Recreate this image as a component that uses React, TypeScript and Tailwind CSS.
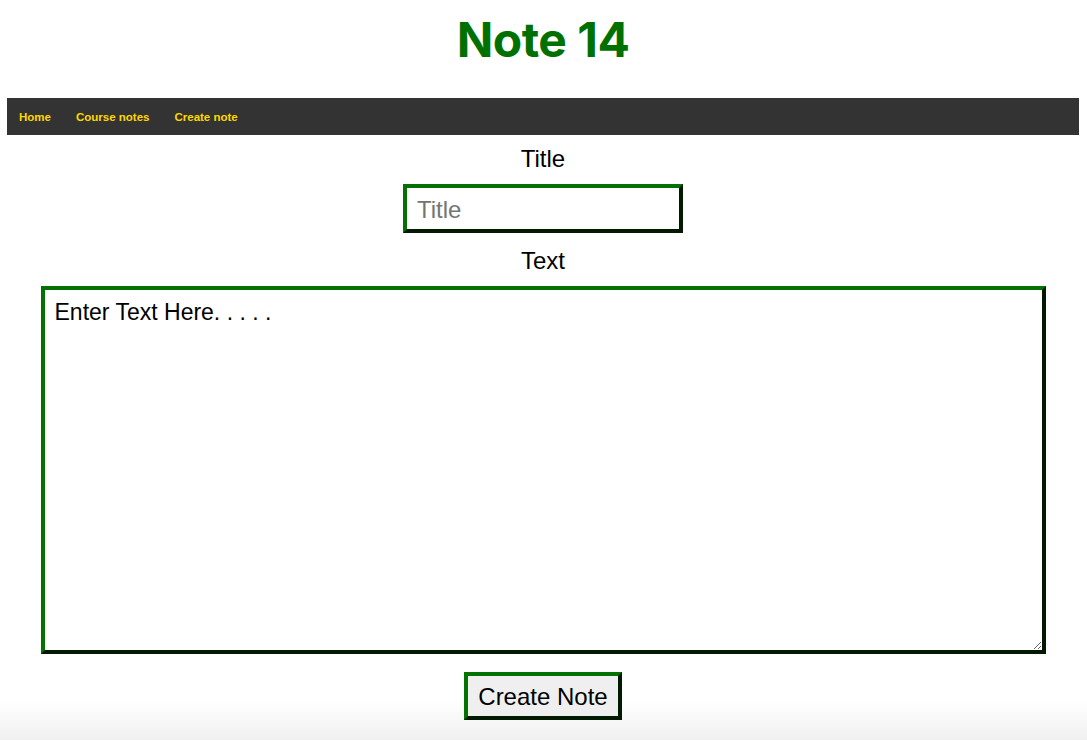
import React from "react";

export default function App() {
  const sans = { fontFamily: '"Liberation Sans", Arial, sans-serif' };
  return (
    <div
      className="min-h-screen bg-[linear-gradient(to_bottom,#ffffff_700px,#f0f0f0_740px)] pl-[7px] pr-[8px] text-black"
      style={sans}
    >
      <h1 className="m-0 flex h-[98px] items-start justify-center pt-[16px] font-['Inter',sans-serif] text-[48px] font-bold leading-none tracking-[-0.5px] text-[#007100]">
        Note 14
      </h1>
      <nav className="flex h-[37px] items-center gap-[25px] bg-[#333333] pl-[12px] pt-[2px] text-[11.5px] font-bold text-[#ffd700]">
        <a>Home</a>
        <a>Course notes</a>
        <a>Create note</a>
      </nav>
      <div className="flex flex-col items-center">
        <label className="mt-[10px] text-[24px] leading-[28px]">Title</label>
        <input
          placeholder="Title"
          className="mt-[11px] box-border h-[49px] w-[280px] border-[4px] border-solid border-t-[#037203] border-l-[#037203] border-b-[#011a01] border-r-[#011a01] bg-white px-[10px] pt-[2px] text-[24px] outline-none placeholder:text-[#757575]"
          style={sans}
        />
        <label className="mt-[14px] text-[24px] leading-[28px]">Text</label>
        <textarea
          defaultValue="Enter Text Here. . . . ."
          className="mt-[11px] box-border h-[368px] w-[1005px] border-[4px] border-solid border-t-[#037203] border-l-[#037203] border-b-[#011a01] border-r-[#011a01] bg-white px-[10px] pt-[9px] text-[23px] leading-[26px] outline-none"
          style={sans}
        />
        <button
          className="mt-[18px] box-border h-[48px] w-[158px] border-[4px] border-solid border-t-[#037203] border-l-[#037203] border-b-[#011a01] border-r-[#011a01] bg-[#efefef] pt-[2px] text-[24px] leading-none"
          style={sans}
        >
          Create Note
        </button>
      </div>
    </div>
  );
}
